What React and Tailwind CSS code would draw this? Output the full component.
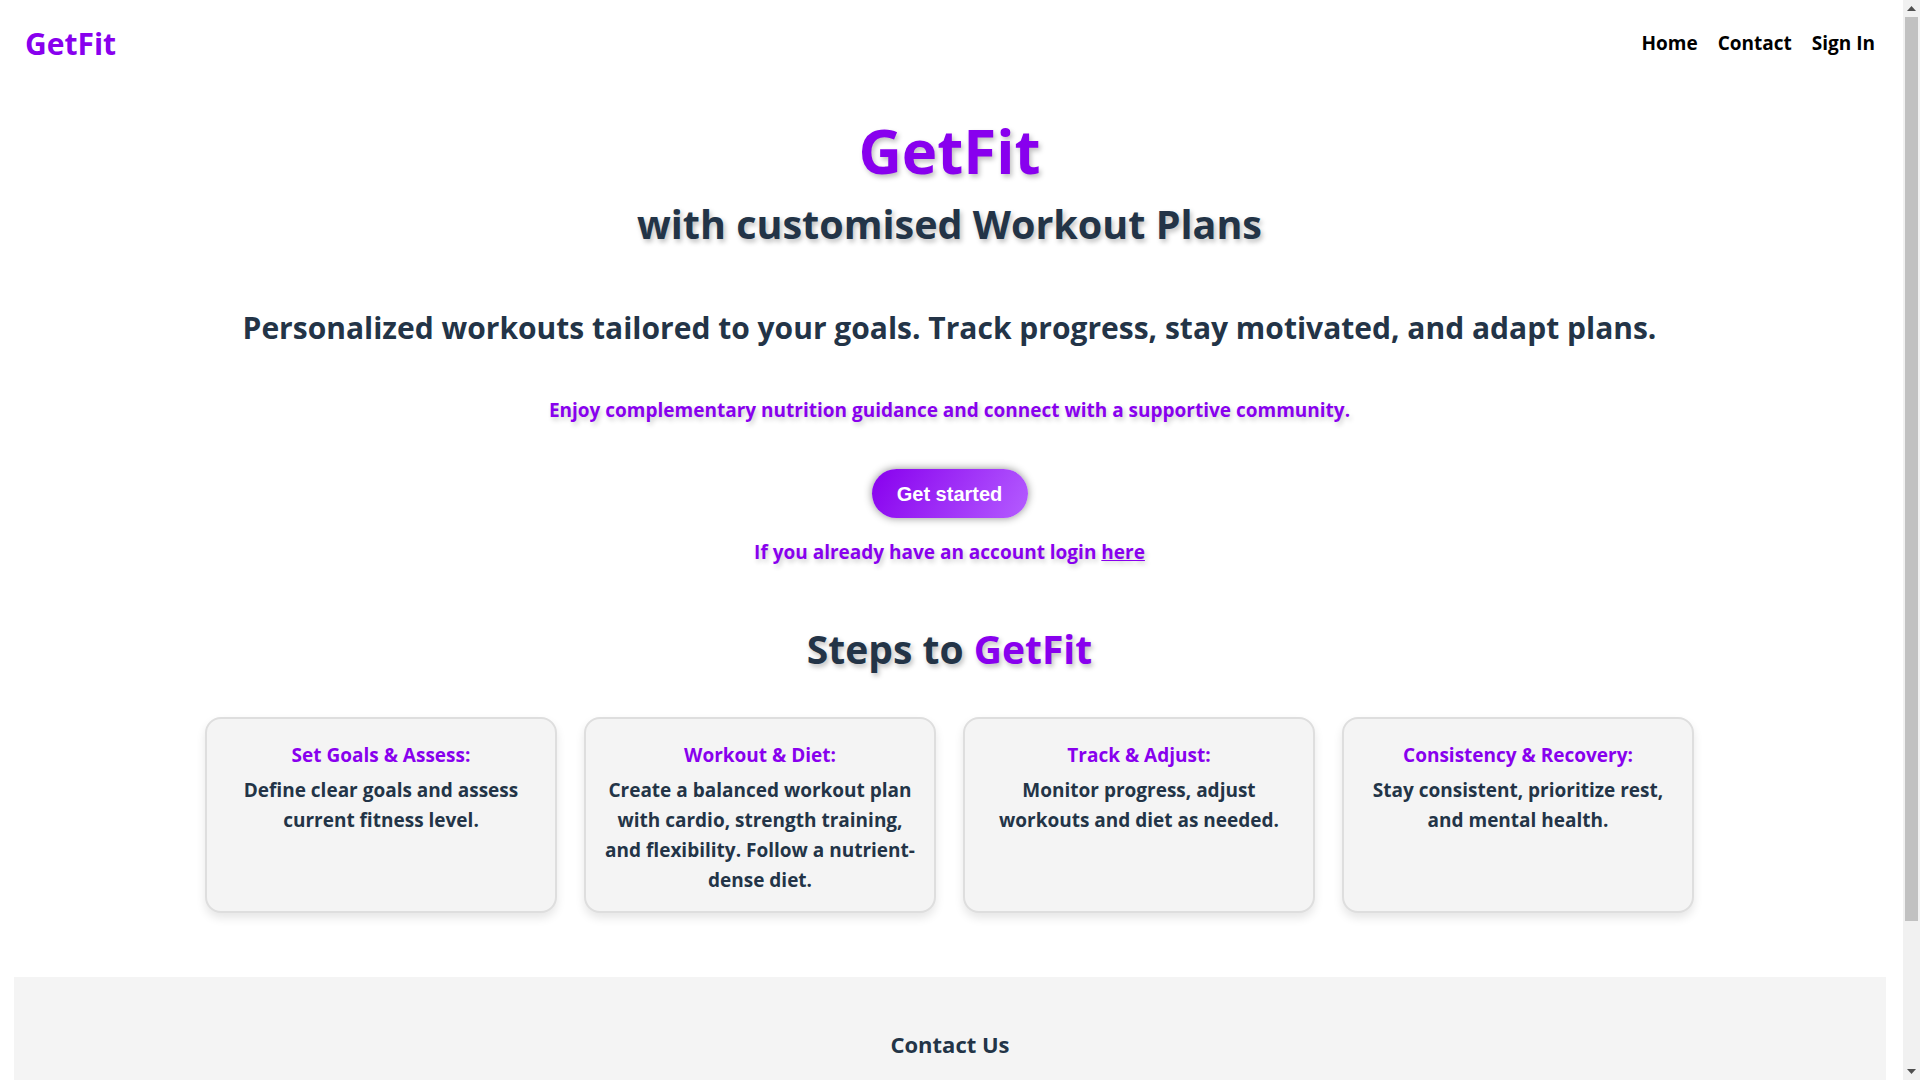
import React from "react";

const purple = "text-[#8800ee]";

const steps = [
  { t: "Set Goals & Assess:", d: "Define clear goals and assess current fitness level." },
  { t: "Workout & Diet:", d: "Create a balanced workout plan with cardio, strength training, and flexibility. Follow a nutrient-dense diet." },
  { t: "Track & Adjust:", d: "Monitor progress, adjust workouts and diet as needed." },
  { t: "Consistency & Recovery:", d: "Stay consistent, prioritize rest, and mental health." },
];

function Scrollbar() {
  return (
    <aside className="sticky top-0 flex h-screen w-[17px] shrink-0 flex-col self-start bg-[#f1f1f1]">
      <div className="flex h-[17px] items-center justify-center">
        <svg width="9" height="5" viewBox="0 0 9 5"><path d="M0 5 L4.5 0 L9 5 Z" fill="#505050" /></svg>
      </div>
      <div className="mx-[2px] h-[904px] bg-[#c1c1c1]" />
      <div className="flex-1" />
      <div className="flex h-[17px] items-center justify-center">
        <svg width="9" height="5" viewBox="0 0 9 5"><path d="M0 0 L4.5 5 L9 0 Z" fill="#505050" /></svg>
      </div>
    </aside>
  );
}

export default function App() {
  return (
    <div className="flex bg-white font-['Open_Sans','Liberation_Sans',sans-serif] text-[#233447]">
      <main className="min-h-[1250px] min-w-0 flex-1">
        <nav className="flex h-[87px] items-center justify-between pl-[25px] pr-[28px]">
          <div className={`text-[30px] font-bold leading-none ${purple}`}>GetFit</div>
          <div className="flex items-center gap-[20px] text-[19px] font-bold text-black">
            <a>Home</a>
            <a>Contact</a>
            <a>Sign In</a>
          </div>
        </nav>

        <section className="flex flex-col items-center pr-[4px] text-center">
          <h1 className={`mt-[34px] text-[60px] font-bold leading-[60px] ${purple} [text-shadow:2px_3px_5px_rgba(0,0,0,0.25)]`}>
            GetFit
          </h1>
          <h2 className="mt-[23.5px] text-[39.5px] font-bold leading-[39.5px] [text-shadow:2px_3px_5px_rgba(0,0,0,0.25)]">
            with customised Workout Plans
          </h2>
          <p className="mt-[69px] text-[30px] font-bold leading-[30px]">
            Personalized workouts tailored to your goals. Track progress, stay motivated, and adapt plans.
          </p>
          <p className={`mt-[58px] text-[19px] font-bold leading-[19px] ${purple} [text-shadow:2px_3px_5px_rgba(0,0,0,0.2)]`}>
            Enjoy complementary nutrition guidance and connect with a supportive community.
          </p>
          <button className="mt-[49px] flex h-[49px] w-[156px] items-center justify-center rounded-full bg-[linear-gradient(120deg,#8800ee,#b45cff)] font-['Liberation_Sans',Arial,sans-serif] text-[20px] font-bold text-white shadow-[0_0_8px_rgba(0,0,0,0.45)]">
            Get started
          </button>
          <p className={`mt-[25px] text-[19px] font-bold leading-[19px] ${purple} [text-shadow:2px_3px_5px_rgba(0,0,0,0.2)]`}>
            If you already have an account login <a className="underline">here</a>
          </p>
          <h2 className="mt-[67px] text-[39px] font-bold leading-[39px] [text-shadow:2px_3px_5px_rgba(0,0,0,0.25)]">
            Steps to <span className={purple}>GetFit</span>
          </h2>

          <div className="mt-[49px] flex gap-[27px]">
            {steps.map((s) => (
              <div
                key={s.t}
                className="h-[196px] w-[352px] rounded-[16px] border-2 border-[#dedede] bg-[#f4f4f4] px-[17px] pt-[21px] shadow-[0_5px_10px_rgba(0,0,0,0.1)]"
              >
                <h3 className={`text-[19px] font-bold leading-[30px] ${purple}`}>{s.t}</h3>
                <p className="mt-[5px] text-[19px] font-bold leading-[30px]">{s.d}</p>
              </div>
            ))}
          </div>
        </section>

        <footer className="ml-[14px] mr-[17px] mt-[64px] h-[260px] bg-[#f4f4f4] pt-[56px] text-center">
          <h2 className="text-[22px] font-bold leading-[22px]">Contact Us</h2>
        </footer>
      </main>
      <Scrollbar />
    </div>
  );
}
